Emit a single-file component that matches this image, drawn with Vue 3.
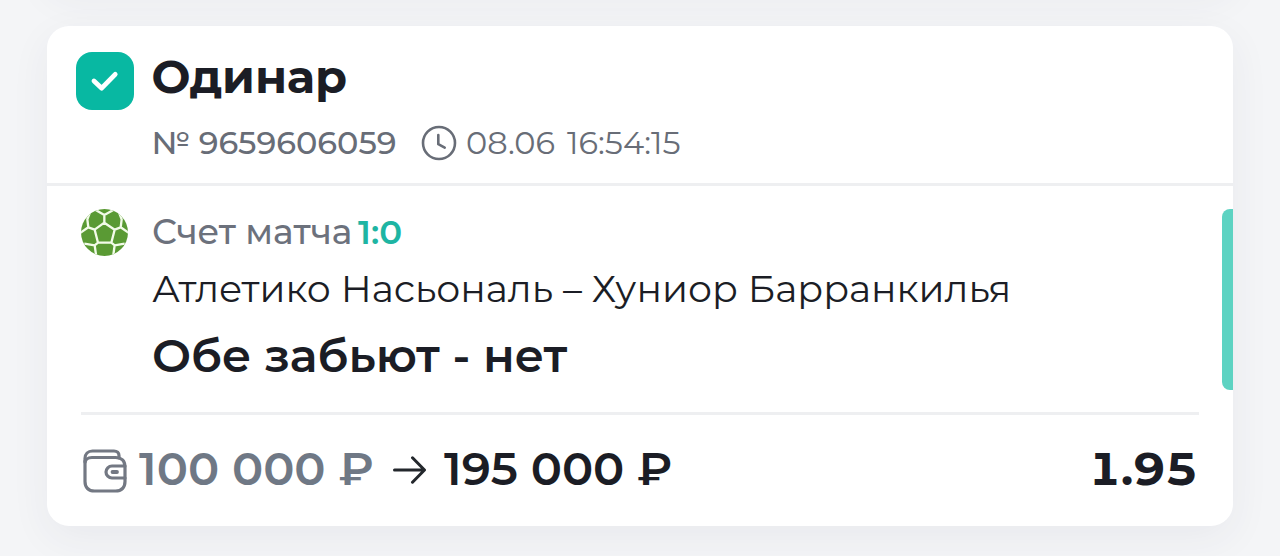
<script setup>
const bet = {
  type: 'Одинар',
  number: '№ 9659606059',
  date: '08.06',
  time: '16:54:15',
  score: '1:0',
  match: 'Атлетико Насьональ – Хуниор Барранкилья',
  outcome: 'Обе забьют - нет',
  stake: '100 000 ₽',
  payout: '195 000 ₽',
  odds: '1.95',
}
</script>

<template>
  <main class="page">
    <div class="card card-prev" />

    <article class="card">
      <header class="head">
        <span class="status">
          <svg viewBox="0 0 58 58" fill="none">
            <path d="M18 29 25.7 36.2 39.2 22.3" />
          </svg>
        </span>
        <div class="head-text">
          <h1 class="type">{{ bet.type }}</h1>
          <div class="meta">
            <span class="number">{{ bet.number }}</span>
            <svg class="clock" viewBox="0 0 36 36" fill="none">
              <circle cx="18" cy="18" r="16" />
              <path d="M17.3 10v9.2l6.4 3.4" />
            </svg>
            <span class="date">{{ bet.date }}</span>
            <span class="time">{{ bet.time }}</span>
          </div>
        </div>
      </header>

      <section class="event">
        <svg class="ball" viewBox="0 0 141 141" fill="none">
          <defs>
            <clipPath id="ballClip"><circle cx="70.5" cy="70.5" r="70.5" /></clipPath>
          </defs>
          <g clip-path="url(#ballClip)">
            <rect width="141" height="141" fill="#5a9a34" />
            <path
              d="M70 41 101 62 91 101H51L41 62ZM70 41V18M70 18 44 3 34-4M70 18 97 3 107-4M101 62l18-7M119 55 122 31 112 5M119 55l26 18M41 62 22 55M22 55 19 31 29 5M22 55-4 73M91 101l10 8M101 109l30-5M101 109l-5 35M51 101 41 109M41 109 10 104M41 109l5 35"
            />
          </g>
        </svg>
        <div class="event-text">
          <p class="score-line">
            <span class="score-label">Счет матча</span>
            <span class="score">{{ bet.score }}</span>
          </p>
          <p class="match">{{ bet.match }}</p>
          <p class="outcome">{{ bet.outcome }}</p>
        </div>
        <span class="marker" />
      </section>

      <footer class="foot">
        <svg class="wallet" viewBox="0 0 44 44" fill="none">
          <path d="M2 12v20.5C2 38.5 5.5 42 11.5 42h21C38.5 42 42 38.5 42 32.5V18C42 12 38.5 8.500 32.500 8.500H9C4.500 8.500 2 11 2 14.500" />
          <path d="M2 13V9.500C2 5 5 2 9.500 2H31c3 0 5 1.800 5 4.500v2.500" />
          <path d="M42 17H29a6 6 0 0 0 0 12H42" />
          <path class="clasp" d="M29.500 23h4.500" />
        </svg>
        <span class="stake">{{ bet.stake }}</span>
        <svg class="arrow" viewBox="0 0 34 28" fill="none">
          <path d="M1.500 14H31M19.500 1.800 31.500 14 19.500 26.200" />
        </svg>
        <span class="payout">{{ bet.payout }}</span>
        <span class="odds">{{ bet.odds }}</span>
      </footer>
    </article>
  </main>
</template>

<style>
body {
  margin: 0;
  background: #f4f5f7;
}
</style>

<style scoped>
.page {
  display: flex;
  flex-direction: column;
  gap: 40px;
  box-sizing: border-box;
  height: 556px;
  padding: 0 47px;
  overflow: hidden;
  background: #f4f5f7;
  font-family: Montserrat, Inter, 'Noto Sans', sans-serif;
  color: #1b1d25;
}

.card {
  flex: none;
  box-sizing: border-box;
  height: 500px;
  border-radius: 22px;
  background: #fff;
  box-shadow: 0 12px 40px rgba(50, 55, 85, 0.06);
}

/* край предыдущей карточки, от неё видна только тень */
.card-prev {
  margin-top: -514px;
}

.head {
  display: flex;
  gap: 17.5px;
  box-sizing: border-box;
  height: 160px;
  padding: 26px 29px 0;
  border-bottom: 3px solid #eeeff1;
}

.status {
  flex: none;
  width: 58px;
  height: 58px;
  border-radius: 16px;
  background: #08b8a2;
}

.status svg {
  display: block;
  width: 58px;
  height: 58px;
  stroke: #fff;
  stroke-width: 4.8;
  stroke-linecap: round;
  stroke-linejoin: round;
}

.type,
.score-line,
.match,
.outcome {
  margin: 0;
  white-space: nowrap;
}

.type {
  height: 50px;
  line-height: 50px;
  font-size: 46.3px;
  font-weight: 700;
}

.meta {
  display: flex;
  align-items: center;
  height: 40px;
  margin-top: 21px;
  color: #686d77;
  font-size: 32px;
  line-height: 40px;
  white-space: nowrap;
}

.number {
  width: 269.5px;
  font-weight: 500;
}

.clock {
  width: 36px;
  height: 36px;
  stroke: #686d77;
  stroke-width: 2.6;
  stroke-linecap: round;
  stroke-linejoin: round;
}

.date {
  width: 101px;
  margin-left: 9px;
}

.event {
  display: flex;
  gap: 24px;
  box-sizing: border-box;
  height: 226px;
  padding: 23px 0 0 34px;
}

.ball {
  flex: none;
  width: 47px;
  height: 47px;
}

.ball path {
  stroke: #f2fbe8;
  stroke-width: 7;
  stroke-linejoin: round;
}

.event-text {
  flex: 1;
}

.score-line {
  display: flex;
  height: 44px;
  line-height: 46px;
  font-size: 34px;
}

.score-label {
  width: 206px;
  color: #6c717c;
  font-size: 34.8px;
  font-weight: 500;
}

.score {
  color: #1eb5a3;
  font-weight: 600;
}

.match {
  height: 50px;
  margin-top: 10px;
  line-height: 50px;
  font-size: 37.8px;
}

.outcome {
  height: 56px;
  margin-top: 15px;
  line-height: 56px;
  font-size: 46.3px;
  font-weight: 600;
}

.marker {
  width: 11px;
  height: 181px;
  border-radius: 8px 0 0 8px;
  background: #5dd3c2;
}

.foot {
  display: flex;
  align-items: center;
  box-sizing: border-box;
  height: 114px;
  padding-bottom: 4px;
  margin: 0 34px;
  border-top: 3px solid #eeeff1;
  font-size: 46.4px;
  font-weight: 600;
  white-space: nowrap;
}

.wallet {
  position: relative;
  top: 2px;
  width: 44px;
  height: 44px;
  margin-left: 2px;
  stroke: #737883;
  stroke-width: 3.2;
  stroke-linecap: round;
  stroke-linejoin: round;
}

.clasp {
  stroke-width: 3.8;
}

.stake {
  width: 254px;
  margin-left: 12px;
  color: #6f7885;
}

.arrow {
  position: relative;
  top: 1px;
  width: 34px;
  height: 28px;
  stroke: #23272c;
  stroke-width: 3;
  stroke-linecap: round;
  stroke-linejoin: round;
}

.payout {
  margin-left: 17px;
}

/* табличные цифры: у «1» есть засечка */
.odds {
  margin-left: auto;
  margin-right: 1px;
  font-weight: 700;
  font-variant-numeric: tabular-nums;
}
</style>
